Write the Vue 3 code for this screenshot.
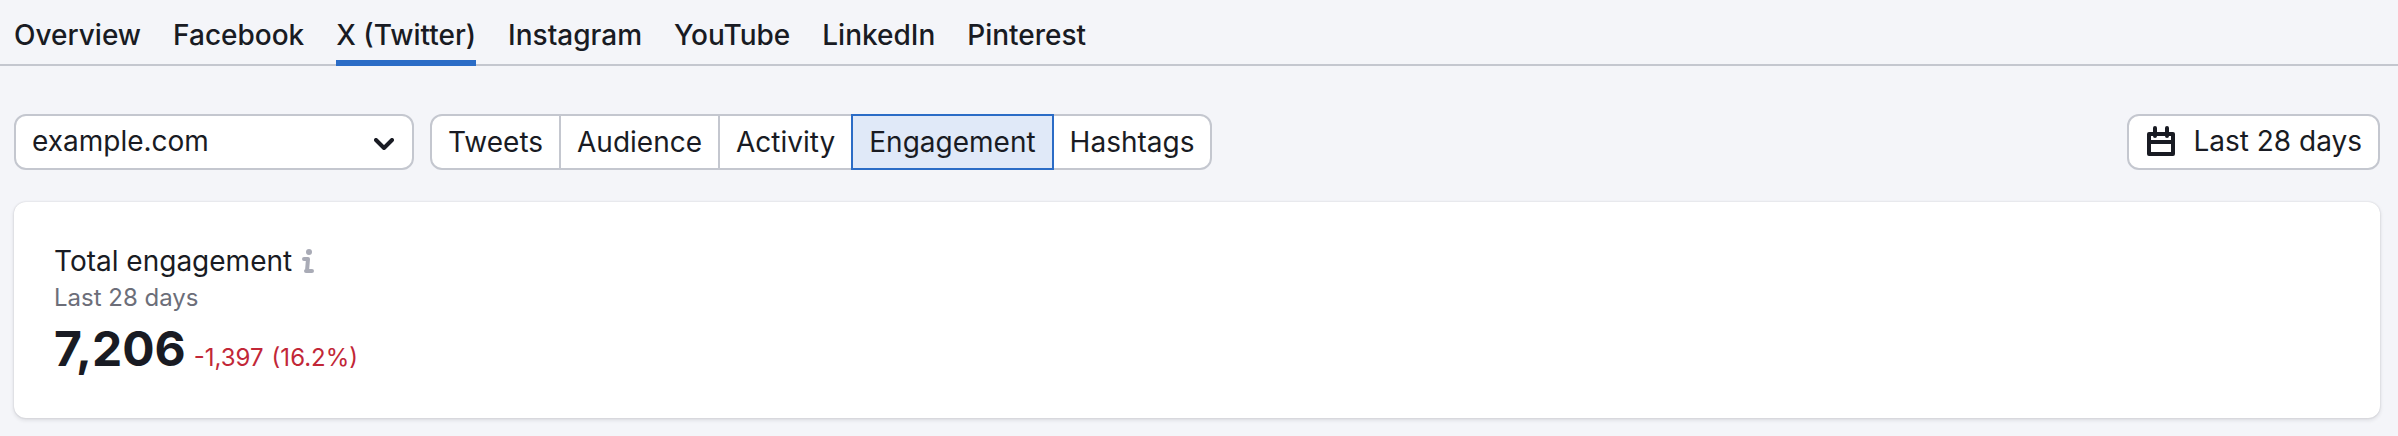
<script setup>
import { ref } from 'vue'

const networks = ['Overview', 'Facebook', 'X (Twitter)', 'Instagram', 'YouTube', 'LinkedIn', 'Pinterest']
const activeNetwork = ref('X (Twitter)')

const reports = ['Tweets', 'Audience', 'Activity', 'Engagement', 'Hashtags']
const activeReport = ref('Engagement')

const profile = ref('example.com')
</script>

<template>
  <div class="page">
    <nav class="tabs" aria-label="Social networks">
      <a
        v-for="name in networks"
        :key="name"
        href="#"
        class="tab"
        :class="{ active: name === activeNetwork }"
        :aria-current="name === activeNetwork ? 'page' : undefined"
        @click.prevent="activeNetwork = name"
      >{{ name }}</a>
    </nav>

    <main class="content">
      <div class="toolbar">
        <div class="select-wrap">
          <select v-model="profile" class="select" aria-label="Profile">
            <option>example.com</option>
          </select>
          <svg class="chevron" viewBox="0 0 20 12" aria-hidden="true">
            <path d="M2 2L10 10L18 2" fill="none" stroke="currentColor" stroke-width="4" stroke-linecap="round" stroke-linejoin="round" />
          </svg>
        </div>

        <div class="pills" role="group" aria-label="Report">
          <button
            v-for="name in reports"
            :key="name"
            type="button"
            class="pill"
            :class="{ selected: name === activeReport }"
            :aria-pressed="name === activeReport"
            @click="activeReport = name"
          >{{ name }}</button>
        </div>

        <button type="button" class="period">
          <svg class="calendar" viewBox="0 0 28 30" aria-hidden="true">
            <path
              fill="currentColor"
              fill-rule="evenodd"
              d="M8 0a2 2 0 0 1 2 2V6H18V2a2 2 0 0 1 4 0V6H26a2 2 0 0 1 2 2V28a2 2 0 0 1-2 2H2a2 2 0 0 1-2-2V8A2 2 0 0 1 2 6H6V2A2 2 0 0 1 8 0ZM4 10V14H24V10H22a2 2 0 0 1-4 0H10a2 2 0 0 1-4 0ZM4 18V26H24V18Z"
            />
          </svg>
          <span>Last 28 days</span>
        </button>
      </div>

      <section class="card">
        <h2 class="title">
          Total engagement
          <svg class="info" viewBox="0 0 12 24" role="img" aria-label="Information">
            <circle cx="7" cy="3" r="3" fill="currentColor" />
            <path d="M2 10H6L5 22M4 22H10" fill="none" stroke="currentColor" stroke-width="4" stroke-linecap="round" stroke-linejoin="round" />
          </svg>
        </h2>
        <p class="range">Last 28 days</p>
        <p class="figures">
          <strong class="total">7,206</strong>
          <span class="change"><span>-1,397</span><span>(16.2%)</span></span>
        </p>
      </section>
    </main>
  </div>
</template>

<style>
body {
  background: #f4f5f9;
}
</style>

<style scoped>
.page {
  color: #191b23;
  font-family: Inter, "Liberation Sans", sans-serif;
  font-size: 28px;
  line-height: 40px;
}

.page * {
  box-sizing: border-box;
}

.tabs {
  display: flex;
  gap: 32px;
  height: 66px;
  padding: 0 14px;
  border-bottom: 2px solid #c4c7cf;
}

.tab {
  height: 66px;
  padding-top: 15px;
  border-bottom: 6px solid transparent;
  color: inherit;
  font-weight: 500;
  text-decoration: none;
  white-space: nowrap;
}

.tab.active {
  border-bottom-color: #2b6cc6;
}

.content {
  padding: 48px 18px 18px 14px;
}

.toolbar {
  display: flex;
  align-items: center;
  gap: 16px;
}

.select,
.pill,
.period {
  height: 56px;
  border: 2px solid #c4c7cf;
  background: #fff;
  color: inherit;
  font: inherit;
  cursor: pointer;
}

.select-wrap {
  display: grid;
  align-items: center;
  width: 400px;
}

.select {
  grid-area: 1 / 1;
  width: 100%;
  padding: 0 48px 2px 16px;
  border-radius: 12px;
  appearance: none;
}

.chevron {
  grid-area: 1 / 1;
  justify-self: end;
  width: 20px;
  height: 12px;
  margin-right: 20px;
  margin-top: 4px;
  pointer-events: none;
}

.pills {
  display: flex;
}

.pill {
  padding: 0 16px;
}

.pill + .pill {
  margin-left: -2px;
}

.pill:first-child {
  border-radius: 12px 0 0 12px;
}

.pill:last-child {
  border-radius: 0 12px 12px 0;
}

.pill.selected {
  z-index: 1;
  border-color: #2b6cc6;
  background: #e0e9f8;
}

.period {
  display: flex;
  align-items: center;
  gap: 18px;
  margin-left: auto;
  padding: 0 16px 2px 18px;
  border-radius: 12px;
}

.calendar {
  width: 28px;
  height: 30px;
}

.card {
  margin-top: 32px;
  padding: 39px 40px 36px;
  border-radius: 12px;
  background: #fff;
  box-shadow: 0 0 2px rgba(25, 27, 35, 0.16), 0 2px 4px rgba(25, 27, 35, 0.12);
}

.title,
.range,
.figures {
  margin: 0;
  font-weight: 400;
}

.title {
  display: flex;
  align-items: center;
  gap: 10px;
  font-size: 28px;
  line-height: 40px;
}

.info {
  width: 12px;
  height: 24px;
  color: #a9abb6;
}

.range {
  color: #6c6e79;
  font-size: 24px;
  line-height: 34px;
}

.figures {
  display: flex;
  align-items: baseline;
  gap: 8px;
}

.total {
  font-size: 48px;
  font-weight: 700;
  line-height: 67px;
}

.change {
  display: flex;
  gap: 8px;
  color: #c22737;
  font-size: 24px;
}
</style>
